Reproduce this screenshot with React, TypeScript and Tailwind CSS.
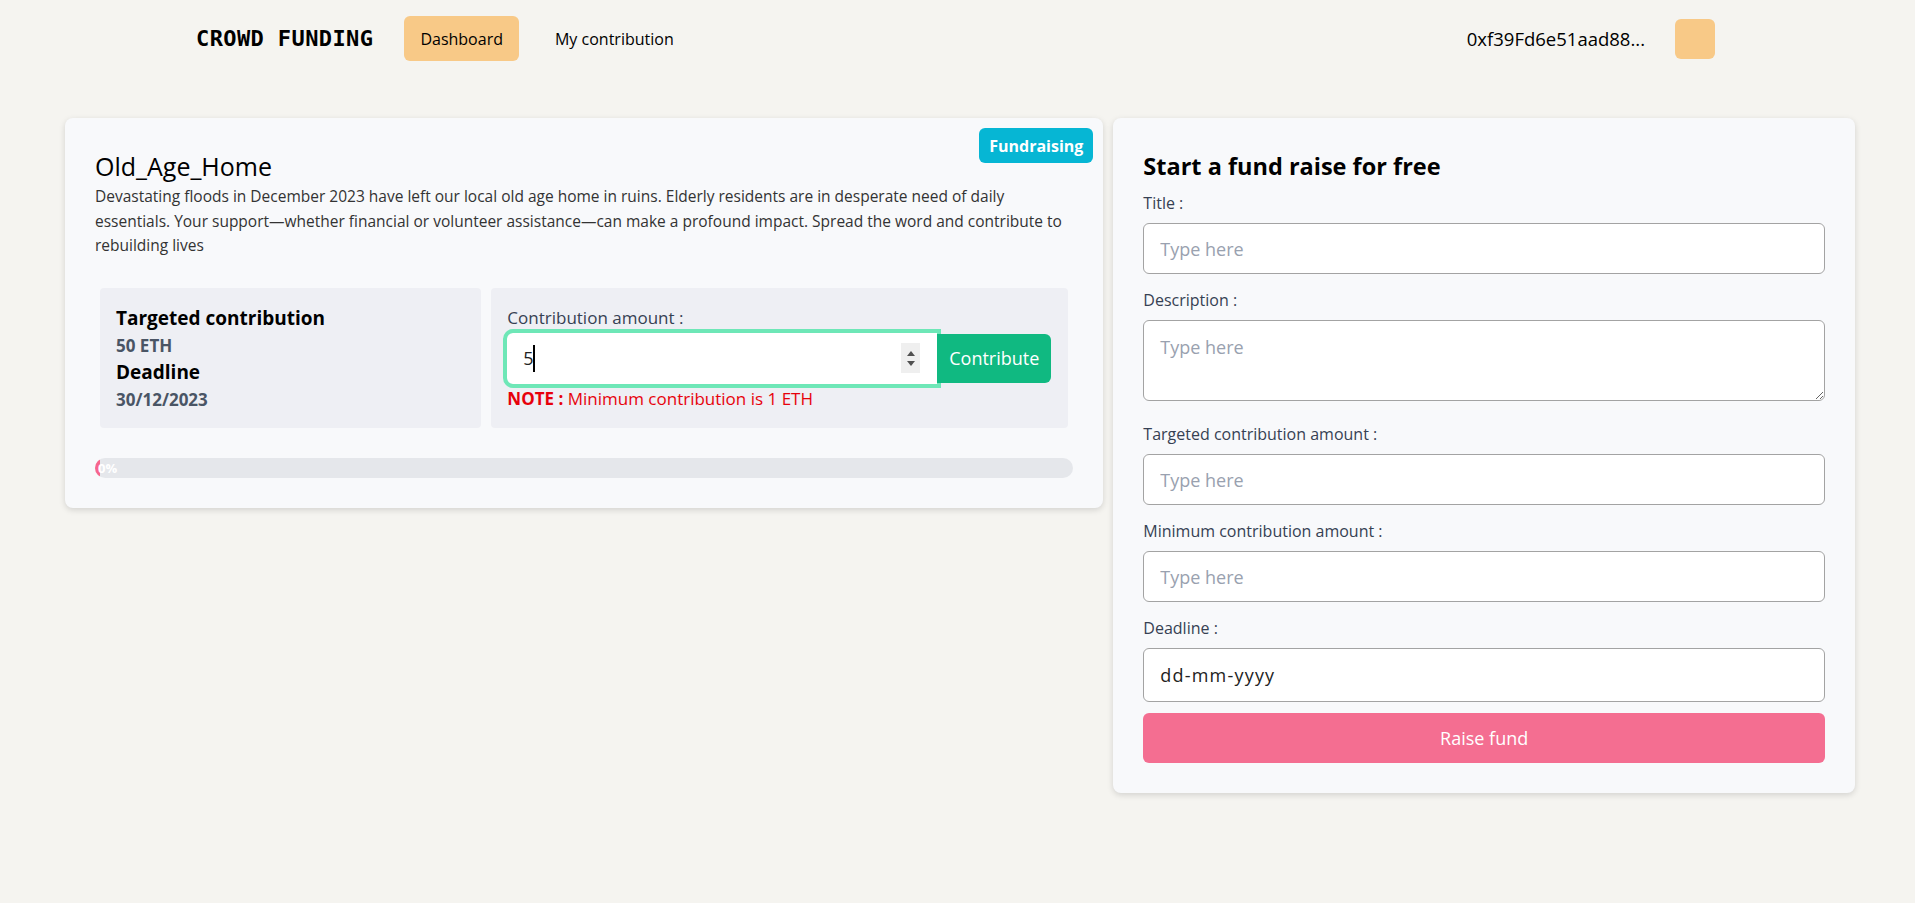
import { useState } from "react";

const fields = [
  { label: "Title :", kind: "input", gap: "mt-[9px]" },
  { label: "Description :", kind: "textarea", gap: "mt-[14px]" },
  { label: "Targeted contribution amount :", kind: "input", gap: "mt-[21px]" },
  { label: "Minimum contribution amount :", kind: "input", gap: "mt-[14px]" },
];

const Navbar = () => (
  <header className="flex h-[77px] items-center justify-between pl-[196px] pr-[200px]">
    <div className="flex items-center">
      <span className="font-['DejaVu_Sans_Mono',monospace] text-[22px] font-bold tracking-[0.4px] text-black">CROWD FUNDING</span>
      <button className="ml-[31px] h-[45px] rounded-md bg-[#f8c987] px-4 text-base text-black">Dashboard</button>
      <button className="ml-5 h-[45px] px-4 text-base text-black">My contribution</button>
    </div>
    <div className="flex items-center">
      <span className="text-[18.5px] text-black">0xf39Fd6e51aad88...</span>
      <div className="ml-[30px] h-10 w-10 rounded-md bg-[#f8c987]" />
    </div>
  </header>
);

const Spinner = () => (
  <div className="absolute right-[17px] top-1/2 flex h-[30px] w-[19px] -translate-y-1/2 flex-col items-center justify-center gap-[5px] bg-[#efefef]">
    <svg width="8" height="5" viewBox="0 0 8 5"><path d="M4 0 L8 5 L0 5 Z" fill="#505050" /></svg>
    <svg width="8" height="5" viewBox="0 0 8 5"><path d="M0 0 L8 0 L4 5 Z" fill="#505050" /></svg>
  </div>
);

const CampaignCard = () => {
  const [amount, setAmount] = useState("5");
  return (
    <section className="relative rounded-lg bg-[#f8f9fb] px-[30px] pb-[30px] pt-8 shadow-[0_2px_6px_rgba(0,0,0,0.14)]">
      <span className="absolute right-[10px] top-[10px] flex h-[35px] items-center rounded-md bg-[#06b6d4] px-[10px] text-base font-bold text-white">
        Fundraising
      </span>
      <h2 className="text-[25px] leading-8 text-black">Old_Age_Home</h2>
      <p className="mt-[2px] text-[15.5px] leading-[24.5px] text-[#333]">
        Devastating floods in December 2023 have left our local old age home in ruins. Elderly residents are in desperate need of daily essentials. Your support—whether financial or volunteer assistance—can make a profound impact. Spread the word and contribute to rebuilding lives
      </p>

      <div className="mx-[5px] mt-[30px] grid grid-cols-5 gap-[10px]">
        <div className="col-span-2 rounded-sm bg-[#eeeff4] px-4 pb-[15px] pt-[17px]">
          <h3 className="text-[19px] font-bold leading-[27px] text-black">Targeted contribution</h3>
          <p className="text-[17px] font-bold leading-[27px] text-gray-600">50 ETH</p>
          <h3 className="text-[19px] font-bold leading-[27px] text-black">Deadline</h3>
          <p className="text-[17px] font-bold leading-[27px] text-gray-600">30/12/2023</p>
        </div>
        <div className="col-span-3 rounded-sm bg-[#eeeff4] pb-4 pl-[16px] pr-[17px] pt-[18px]">
          <label className="block text-[17px] leading-6 text-gray-700">Contribution amount :</label>
          <div className="mt-[3px] flex items-center">
            <div className="relative flex-1">
              <input
                type="number"
                value={amount}
                onChange={(e) => setAmount(e.target.value)}
                className="block h-[51px] w-full rounded-l-md bg-white pl-4 text-lg text-[#222] outline-4 outline-solid outline-[#6ee7b7] [appearance:textfield] [&::-webkit-inner-spin-button]:appearance-none"
              />
              <span className="absolute left-[26px] top-[12px] h-[27px] w-[2px] bg-black" />
              <Spinner />
            </div>
            <button className="relative h-[49px] w-[114px] shrink-0 rounded-r-md bg-[#10b981] text-lg text-white">Contribute</button>
          </div>
          <p className="mt-[3px] text-[17px] leading-6 text-red-600">
            <span className="font-bold">NOTE :</span> Minimum contribution is 1 ETH
          </p>
        </div>
      </div>

      <div className="relative mt-[30px] h-5 overflow-hidden rounded-full bg-[#e5e7eb]">
        <div className="h-full w-[5px] rounded-full bg-[#f7668c]" />
        <span className="absolute left-[3px] top-0 text-[13px] font-bold leading-5 text-white">0%</span>
      </div>
    </section>
  );
};

const CreateForm = () => (
  <section className="rounded-lg bg-[#f8f9fb] px-[30px] pb-[30px] pt-8 shadow-[0_2px_6px_rgba(0,0,0,0.14)]">
    <h2 className="text-[23.5px] font-bold leading-8 text-black">Start a fund raise for free</h2>
    {fields.map((f) => (
      <div key={f.label} className={f.gap}>
        <label className="mb-2 block text-base leading-6 text-gray-700">{f.label}</label>
        {f.kind === "textarea" ? (
          <textarea
            placeholder="Type here"
            className="block h-[81px] w-full rounded-md border border-[#a3a3a3] bg-white px-4 py-3 text-lg placeholder:text-gray-400"
          />
        ) : (
          <input
            type="text"
            placeholder="Type here"
            className="block h-[51px] w-full rounded-md border border-[#a3a3a3] bg-white px-4 text-lg placeholder:text-gray-400"
          />
        )}
      </div>
    ))}
    <div className="mt-[14px]">
      <label className="mb-2 block text-base leading-6 text-gray-700">Deadline :</label>
      <input
        type="text"
        placeholder="dd-mm-yyyy"
        className="block h-[54px] w-full rounded-md border border-[#a3a3a3] bg-white px-4 text-lg tracking-[1.2px] placeholder:text-[#222]"
      />
    </div>
    <button className="mt-[11px] h-[50px] w-full rounded-md bg-[#f46e91] text-lg text-white">Raise fund</button>
  </section>
);

export default function App() {
  return (
    <div className="min-h-screen bg-[#f5f4f0] font-['Open_Sans',sans-serif]">
      <Navbar />
      <main className="grid grid-cols-[7fr_5fr] items-start gap-[10px] pl-[65px] pr-[60px] pt-[41px]">
        <CampaignCard />
        <CreateForm />
      </main>
    </div>
  );
}
